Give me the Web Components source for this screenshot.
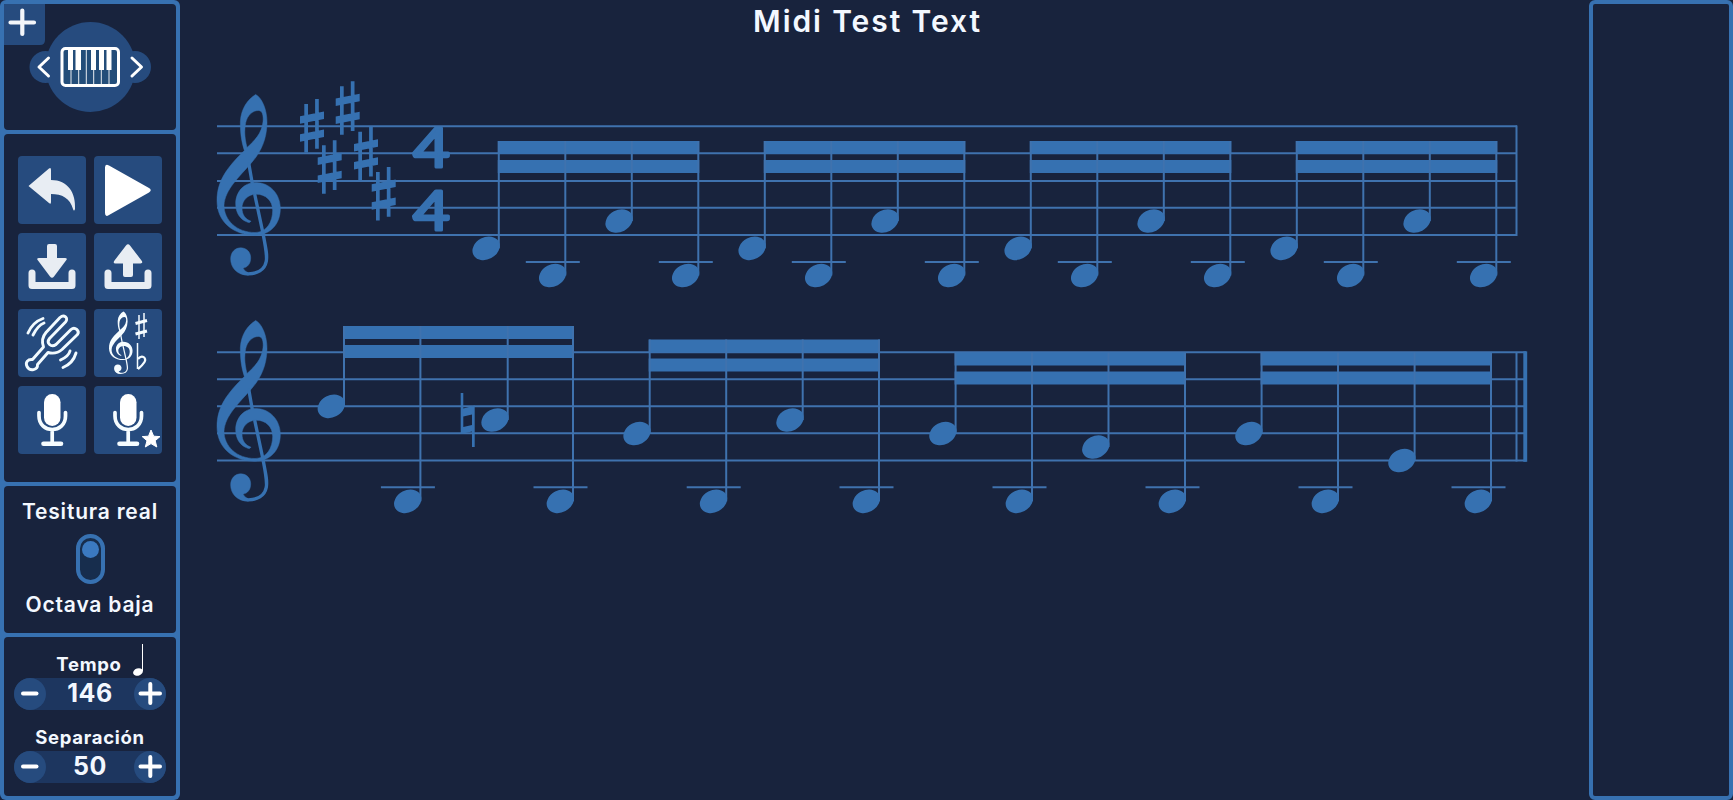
<!DOCTYPE html>
<html lang="es">
<head>
<meta charset="utf-8">
<title>Midi Test Text</title>
<style>
  html, body { margin: 0; height: 100%; background: #18233d; overflow: hidden; }
  body {
    --line: #3771b1;
    --note: #3671b1;
    --bg: #18233d;
    --btn: #264b7e;
    --btn-dim: #1d365f;
    font-family: Inter, "Liberation Sans", sans-serif;
    color: #f3f8ff;
  }
</style>
</head>
<body>
<midi-app></midi-app>

<script>
const define = (name, html, setup) => {
  const template = document.createElement("template");
  template.innerHTML = html;
  customElements.define(name, class extends HTMLElement {
    constructor() {
      super();
      this.attachShadow({ mode: "open" }).appendChild(template.content.cloneNode(true));
    }
    connectedCallback() {
      if (setup) setup(this, this.shadowRoot);
    }
  });
};

// treble clef, 190 x 545 units
const CLEF = `
  <path fill="currentColor" fill-rule="evenodd" d="M116 0C134 9 151 45 150 87C149 137 130 174 105 203C66 248 24 285 21 332C21 377 59 414 114 414C149 414 167 382 167 347C167 319 146 299 118 299C92 299 75 319 75 340C75 362 86 375 102 380C99 385 94 385 89 382C69 374 56 355 56 327C56 292 81 264 116 264C159 264 190 299 190 342C190 390 159 422 114 422C49 422 0 382 0 319C0 258 30 220 82 168C72 137 70 112 70 82C72 42 92 15 116 0ZM90 159C82 127 82 107 86 85C91 62 107 48 124 48C136 48 140 62 138 82C134 117 114 137 90 159Z"/>
  <path fill="none" stroke="currentColor" stroke-width="10" d="M95 205L106 268M113 299L136 407C147 463 151 480 148 500C143 527 119 538 94 538C76 537 64 530 56 519"/>
  <path fill="currentColor" d="M71 460C90 460 101 474 101 490C101 508 92 518 78 521Q84 532 94 535L94 542C60 542 41 520 41 493C41 474 54 460 71 460Z"/>`;

const ICONS = {
  undo: `<path fill="#e8edf3" d="M10.5 30 31 12.5Q33 11 33 14V24C50 24 58 37 57 53Q56 56 55 53C52 42 44 38 33 38V46Q33 49 31 47Z"/>`,
  play: `<path fill="#fff" d="M11 11.500Q11 7.500 15 9.500L55 32Q58.500 34 55 36.500L15 59Q11 61.500 11 57Z"/>`,
  down: `<path fill="#e8edf3" d="M29 13Q29 11 31 11H37Q39 11 39 13V25H47Q50 25 48 27.500L36 43.500Q34 46 32 43.500L20 27.500Q18 25 21 25H29Z"/>
    <path fill="none" stroke="#e8edf3" stroke-width="7" stroke-linecap="round" stroke-linejoin="round" d="M14 40V52.500H54V40"/>`,
  up: `<path fill="#e8edf3" d="M29 42Q29 44 31 44H37Q39 44 39 42V30.500H46.500Q49.500 30 47.500 27.500L36 12.500Q34 10 32 12.500L20.500 27.500Q18.500 30.500 21.500 30.500H29Z"/>
    <path fill="none" stroke="#e8edf3" stroke-width="7" stroke-linecap="round" stroke-linejoin="round" d="M14 40V52.500H54V40"/>`,
  fork: `<g fill="none" stroke="#f2fbff" stroke-width="2.900" stroke-linecap="round" stroke-linejoin="round">
    <path d="M42 8.500C46 5 51 9 47.500 13L31.500 29.500C28 34 33 39 38 35.500L53 20.500C57 17 62 22 59.500 25.500L44 40.500C40 44 34 44.500 30 43.500L19.500 55.500C20 61 12 63 9 57.500C7 53 10 50 14.500 50.500L25.500 38C23 31 25 27 28 23.500Z"/>
    <path d="M10 24C13 17 18 12 25 9.500M15 26C18 20 21 16 26 14"/>
    <path d="M52 42C51 46 47 49 42.500 51M58 44C56 51 51 56 45 58.500"/></g>`,
  key: `<g color="#f5fcff" transform="translate(15 2.500) scale(.124 .115)">${CLEF}</g>
    <g fill="none" stroke="#f5fcff"><path stroke-width="1.500" d="M45 6V30M50 4V28"/><path stroke-width="3" d="M41.500 14.500 53 11.500M41.500 25 53 22"/>
    <path stroke-width="1.500" d="M43.500 34V60"/><path stroke-width="2.300" d="M44 50C48 45 53 49 50.500 53Q48 57 44 60"/></g>`,
  mic: `<rect x="26" y="8" width="16.500" height="32" rx="8.200" fill="#fff"/>
    <path fill="none" stroke="#f5fcff" stroke-width="3.700" stroke-linecap="round" d="M21 26.500V30C21 48 47.500 48 47.500 30V26.500M34.200 44V57"/>
    <path stroke="#f5fcff" stroke-width="4.600" stroke-linecap="round" d="M25.500 57.700H43"/>`
};
ICONS.micstar = ICONS.mic + `<path fill="#fff" stroke="#fff" stroke-linejoin="round" d="M57 44 59.700 50.200 66 50.600 61.200 54.700 62.800 61 57 57.600 51.300 61 53 54.700 48.200 50.600 54.500 50.200Z"/>`;

define("tool-button", `
  <style>
    :host { display: block; }
    button { display: block; width: 68px; height: 68px; padding: 0; border: 0; border-radius: 4px; background: var(--btn); }
    svg { display: block; }
  </style>
  <button><svg width="68" height="68" viewBox="0 0 68 68"></svg></button>
`, (host, root) => {
  root.querySelector("svg").innerHTML = ICONS[host.getAttribute("icon")];
  root.querySelector("button").setAttribute("aria-label", host.getAttribute("icon"));
});

define("side-section", `
  <style>
    :host { display: flex; flex-direction: column; align-items: center; box-sizing: border-box; background: var(--bg); border-radius: 4px; }
  </style>
  <slot></slot>
`);

define("instrument-picker", `
  <style>
    :host { display: block; width: 172px; height: 126px; }
    svg { display: block; }
  </style>
  <svg width="172" height="126" viewBox="4 4 172 126">
    <path fill="var(--btn)" d="M4 4H45V40Q45 45 40 45H4Z"/>
    <path fill="none" stroke="#f3f6fa" stroke-width="4.200" stroke-linecap="round" d="M10.500 22.500H34M22.300 10.500V34"/>
    <g fill="var(--btn)"><circle cx="45.500" cy="67" r="16"/><circle cx="135" cy="67" r="16"/><circle cx="90.500" cy="67" r="45"/></g>
    <path fill="none" stroke="#fff" stroke-width="3" stroke-linecap="round" stroke-linejoin="round" d="M48.500 58 39 67 48.500 76M132 58 141.500 67 132 76"/>
    <rect x="62" y="48.500" width="56.500" height="37" rx="3.500" fill="#234d79" stroke="#fff" stroke-width="3"/>
    <path stroke="#fff" stroke-width=".9" d="M71 50V84M78.700 50V84M86.300 50V84M93.700 50V84M101.300 50V84M109 50V84"/>
    <path fill="#fff" d="M68 49H73V70H68ZM75.500 49H81V70H75.500ZM91 49H96V70H91ZM99 49H104V70H99ZM106.500 49H111.500V70H106.500Z"/>
  </svg>
`);

define("range-switch", `
  <style>
    :host { display: block; box-sizing: border-box; width: 29px; height: 50px; border: 4px solid var(--line); border-radius: 15px; background: #172d4d; padding: 3px 2px; }
    i { display: block; width: 17px; height: 17px; border-radius: 50%; background: #3b79c0; }
  </style>
  <i></i>
`);

define("value-stepper", `
  <style>
    :host { display: block; width: 152px; }
    .label { display: flex; justify-content: center; align-items: flex-end; height: 26px; font-size: 18.500px; line-height: 27px; font-weight: 700; letter-spacing: .7px; white-space: nowrap; }
    .row { display: flex; justify-content: space-between; align-items: center; height: 32px; border-radius: 16px; background: var(--btn-dim); font-size: 25px; line-height: 30px; font-weight: 700; letter-spacing: .6px; }
    button { width: 32px; height: 32px; padding: 0; border: 0; border-radius: 50%; background: var(--btn); }
    span { margin-top: -2px; }
    svg { display: block; }
    path { stroke: #fff; stroke-width: 4; stroke-linecap: round; }
  </style>
  <div class="label"><slot></slot></div>
  <div class="row">
    <button aria-label="menos"><svg width="32" height="32"><path d="M9 15.500H22.500"/></svg></button>
    <span></span>
    <button aria-label="más"><svg width="32" height="32"><path d="M6.500 15.500H26M16.300 6V25"/></svg></button>
  </div>
`, (host, root) => {
  root.querySelector("span").textContent = host.getAttribute("value");
});

define("side-bar", `
  <style>
    :host { display: flex; flex-direction: column; gap: 4px; box-sizing: border-box; width: 180px; height: 800px; padding: 4px; background: var(--line); border-radius: 6px; }
    .tools { height: 348px; padding-top: 22px; }
    .grid { display: grid; grid-template-columns: 68px 68px; gap: 8.700px; }
    .range { height: 147px; padding-top: 12px; font-size: 21px; line-height: 28px; font-weight: 600; }
    .range span { letter-spacing: .8px; white-space: nowrap; }
    range-switch { margin: 8px 0 7px; }
    .values { flex: 1; padding-top: 15px; gap: 15px; }
    .quarter { margin: 0 -20px 2px 11px; }
  </style>
  <side-section><instrument-picker></instrument-picker></side-section>
  <side-section class="tools">
    <div class="grid">
      <tool-button icon="undo"></tool-button><tool-button icon="play"></tool-button>
      <tool-button icon="down"></tool-button><tool-button icon="up"></tool-button>
      <tool-button icon="fork"></tool-button><tool-button icon="key"></tool-button>
      <tool-button icon="mic"></tool-button><tool-button icon="micstar"></tool-button>
    </div>
  </side-section>
  <side-section class="range">
    <span>Tesitura real</span>
    <range-switch></range-switch>
    <span>Octava baja</span>
  </side-section>
  <side-section class="values">
    <value-stepper value="146">Tempo<svg class="quarter" width="11" height="32"><ellipse cx="5" cy="28" rx="5" ry="3.600" transform="rotate(-18 5 28)" fill="#fff"/><path stroke="#fff" d="M9.500 0V27"/></svg></value-stepper>
    <value-stepper value="50">Separación</value-stepper>
  </side-section>
`);

// notes are [stem x, head y]; a group also has the y of its upper beam
const SYSTEMS = [
  {
    lines: [126.3, 153.3, 181, 207.8, 235],
    right: 1517,
    clef: 94.5,
    groups: [0, 1, 2, 3].map(i => ({
      beam: 141,
      notes: [248.3, 275.5, 221, 275.5].map((y, n) => [498.8 + 66.5 * (i * 4 + n), y])
    })),
    ledger: 262
  },
  {
    lines: [352.3, 379.2, 406.3, 433.2, 460.5],
    right: 1526,
    clef: 320.5,
    groups: [
      { beam: 326, notes: [[344, 406.3], [420.4, 501.3], [507.7, 420], [573, 501.3]] },
      { beam: 339.5, notes: [[649.7, 433.5], [726.2, 501.3], [802.7, 420], [879, 501.3]] },
      { beam: 352.5, notes: [[955.6, 433.5], [1032, 501.3], [1108.5, 447], [1185, 501.3]] },
      { beam: 352.5, notes: [[1261.6, 433.5], [1338, 501.3], [1414.6, 460.5], [1491, 501.3]] }
    ],
    ledger: 487.3
  }
];

const drawSystem = s => {
  let out = s.lines.map(y => `<path d="M217 ${y}H${s.right}"/>`).join("");
  out += `<g transform="translate(217 ${s.clef}) scale(.3333)">${CLEF}</g>`;
  for (const g of s.groups) {
    const x1 = g.notes[0][0] - 1;
    const x2 = g.notes[3][0] + 1;
    out += `<path class="f" d="M${x1} ${g.beam}H${x2}v13H${x1}ZM${x1} ${g.beam + 19}H${x2}v13H${x1}Z"/>`;
    for (const [x, y] of g.notes) {
      out += `<path d="M${x} ${g.beam}V${y}"/><ellipse class="f" cx="${x - 12.7}" cy="${y}" rx="14.300" ry="11" transform="rotate(-28 ${x - 12.7} ${y})"/>`;
      if (y > s.ledger) out += `<path d="M${x - 39.5} ${s.ledger}h54"/>`;
    }
  }
  return out;
};

const SHARPS = [[300, 99], [335.7, 81.3], [317.7, 140.3], [354, 126.7], [371.7, 167]];

define("music-score", `
  <style>
    :host { display: block; }
    svg { display: block; color: var(--note); }
    path { fill: none; stroke: #3f72ae; stroke-width: 2; }
    g path[fill="currentColor"] { fill: currentColor; stroke: currentColor; stroke-width: 1.500; }
    g path[stroke-width="10"] { stroke: currentColor; stroke-width: 10; }
    .f { fill: var(--note); stroke: none; }
    text { fill: var(--note); stroke: var(--note); stroke-width: 3; stroke-linejoin: round; font: 400 54px Lato, sans-serif; }
  </style>
  <svg width="1400" height="755" viewBox="185 45 1400 755"></svg>
`, (host, root) => {
  let art = SYSTEMS.map(drawSystem).join("");
  art += SHARPS.map(([x, y]) => `<path class="f" transform="translate(${x} ${y})" d="M4.300 5h3.700v48.500H4.300ZM15.100 0h3.700v49.700h-3.700ZM0 17.300 24 12.500v7.500L0 24.800ZM0 35.300 24 30.500v7.500L0 42.800Z"/>`).join("");
  art += `<path class="f" d="M460.700 393h2.600v15.500l11.400-3v41.500H472v-15.500L460.700 434ZM463.300 416.500V427L472 425V414.500Z" fill-rule="evenodd"/>`;
  art += [167, 230].map(y => `<text x="413" y="${y}" textLength="37" lengthAdjust="spacingAndGlyphs">4</text>`).join("");
  art += `<path d="M1516.500 125.500V236M1516.500 352V461.500"/><path class="f" d="M1523.300 351.300h3.900v110.500h-3.900Z"/>`;
  root.querySelector("svg").innerHTML = art;
});

define("midi-app", `
  <style>
    :host { display: flex; width: 1733px; height: 800px; background: var(--bg); }
    main { flex: 1; display: flex; flex-direction: column; padding-left: 5px; }
    h1 { margin: 0; height: 45px; line-height: 42px; width: 1365px; text-align: center; font-size: 30px; font-weight: 600; letter-spacing: 1.900px; white-space: nowrap; }
    aside { box-sizing: border-box; width: 144px; height: 800px; border: 4px solid var(--line); border-radius: 6px; }
  </style>
  <side-bar></side-bar>
  <main>
    <h1>Midi Test Text</h1>
    <music-score></music-score>
  </main>
  <aside></aside>
`);
</script>
</body>
</html>
